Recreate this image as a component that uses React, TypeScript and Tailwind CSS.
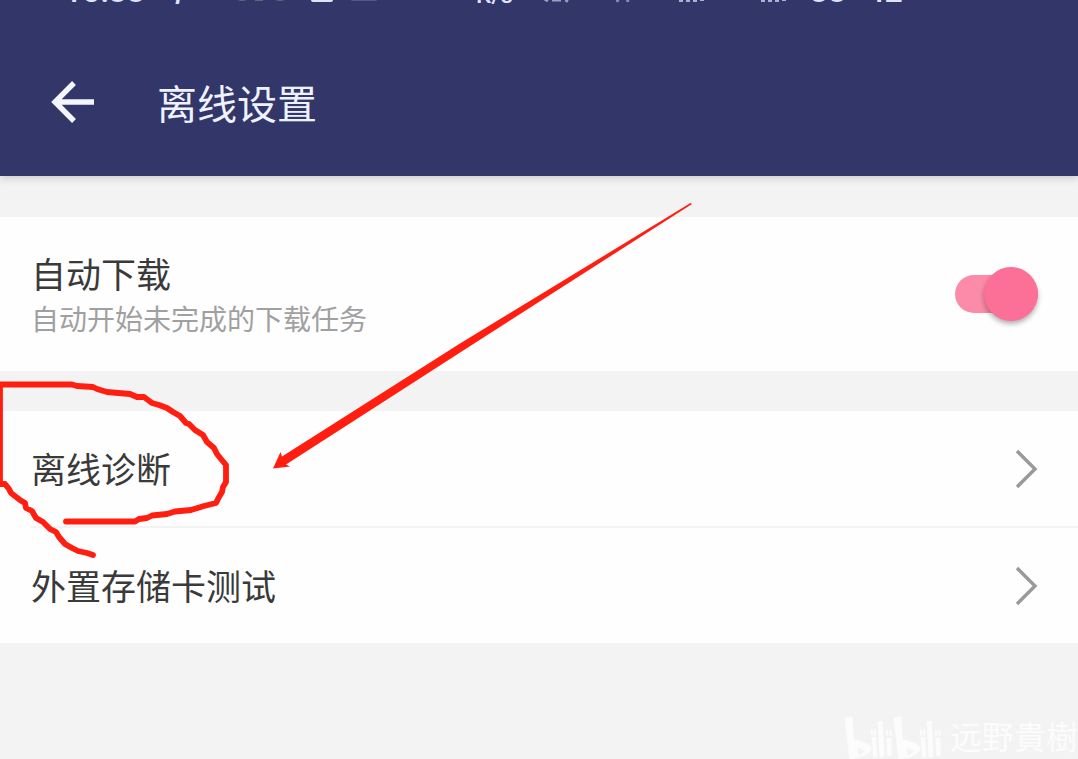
import { useState } from 'react';

const links = ['离线诊断', '外置存储卡测试'];

function SignalIcon() {
  return (
    <svg width="30" height="24" viewBox="0 0 30 24" fill="currentColor">
      <path d="M1 16h4v6H1zM8 11h4v11H8zM15 6h4v16h-4zM22 1h4v20h-4z" />
    </svg>
  );
}

function StatusBar() {
  return (
    <div className="flex h-1 items-end overflow-hidden pl-16 font-['Roboto',sans-serif] text-[32px] leading-[26px] font-medium text-[#dfe3ff]">
      <span className="w-[110px]">10:33</span>
      <span className="w-14">,</span>
      <svg className="opacity-30" width="60" height="24" viewBox="0 0 60 24" fill="#ddd0a0">
        <circle cx="12" cy="10" r="11" />
        <rect x="25" y="4" width="8" height="17" />
        <circle cx="50" cy="10" r="11" />
      </svg>
      <svg className="ml-5" width="24" height="24" viewBox="0 0 24 24" fill="currentColor">
        <rect x="1" y="2" width="22" height="20" rx="2" />
      </svg>
      <svg className="ml-4 opacity-20" width="28" height="24" viewBox="0 0 28 24" fill="currentColor">
        <rect y="3" width="28" height="18" rx="3" />
      </svg>
      <span className="ml-[98px] w-16 text-2xl leading-[18px]">K/s</span>
      <svg className="opacity-60" width="32" height="24" viewBox="0 0 32 24" fill="none" stroke="currentColor" strokeWidth="3">
        <path d="M3 4v14l5 3M12 20h9M28 4v14l-2 4" />
      </svg>
      <svg className="ml-10 opacity-50" width="18" height="24" viewBox="0 0 18 24" fill="none" stroke="currentColor" strokeWidth="3">
        <path d="M2 8l4 14M14 12l2 10" />
      </svg>
      <div className="ml-12 w-[82px] opacity-70">
        <SignalIcon />
      </div>
      <div className="opacity-70">
        <SignalIcon />
      </div>
      <span className="ml-5">33</span>
      <span className="ml-5">42</span>
    </div>
  );
}

function Chevron() {
  return (
    <svg width="24" height="42" viewBox="0 0 24 42" fill="none" stroke="#999" strokeWidth="3.4">
      <path d="M3 3l18 18L3 39" />
    </svg>
  );
}

function BilibiliLogo() {
  return (
    <svg width="98" height="44" viewBox="0 0 294 132" fill="currentColor" role="img" aria-label="bilibili">
      <g id="bili">
        <path
          fillRule="evenodd"
          d="M2 10L25 3L30 73C48 76 78 87 82 98C85 112 54 131 16 132ZM42 98L44 122L64 108Z"
        />
        <path d="M80 45l6-1 2 17-6 1zM90 44h6v17l-5 1zM83 67l13-1 4 60-12 2zM101 19l15-1 5 108-14 2zM126 46l6-1 1 17-6 1zM137 45h6v17h-6zM127 69h15l1 53-13 1z" />
      </g>
      <use href="#bili" x="147" />
    </svg>
  );
}

// red pen marks drawn over the page
function Annotations() {
  return (
    <svg
      className="pointer-events-none absolute top-0 left-0"
      width="1078"
      height="759"
      viewBox="0 0 1078 759"
      aria-hidden="true"
    >
      <g fill="none" stroke="#ff1e10" strokeWidth="5.8" strokeLinecap="round" strokeLinejoin="round">
        <path d="M66 521.5H135L139 519L147 518L152 515.5L167 514L175 511.5L191 510L204 506L216 503L219 497L222 492L223 487L226 482V465L221 459L217 454L214 448L207 442L203 435L195 430L189 424L186 423L180 416L173 412L167 408L159 405L152 403L144 397L137 397L130 394L107 392L97 389L93 387L77 386L72 384.5H0V484H5L9 489L11 493L20 500L25 503L26 508L32 511L36 518L43 522L50 529L56 532L59 537L65 544L72 548L78 551L87 553L93 555" />
      </g>
      <path d="M273 468.5L280.5 452L282 456.5L460 343.5L690.5 203L692 204L464 350L286 464.5L290 466.5Z" fill="#ff1e10" />
    </svg>
  );
}

export default function App() {
  const [autoDownload, setAutoDownload] = useState(true);

  return (
    <div className="relative flex min-h-screen flex-col overflow-hidden bg-[#f3f3f3] font-['Noto_Sans_CJK_SC',sans-serif] text-[#3a3a3a]">
      <header className="bg-[#333668] pb-11 shadow-[0_2px_8px_rgba(0,0,0,0.18)]">
        <StatusBar />
        <div className="flex items-center pt-[68px] pl-12">
          <button type="button" aria-label="返回" className="text-[#f4f6ff]">
            <svg width="48" height="48" viewBox="0 0 48 48" fill="none" stroke="currentColor" strokeWidth="5.4">
              <path d="M46 24H7M26 5L7 24L26 43" />
            </svg>
          </button>
          <h1 className="ml-[61px] text-[40px] leading-[60px] text-[#eef2ff]">离线设置</h1>
        </div>
      </header>

      <main className="mt-[41px]">
        <section className="flex items-center justify-between bg-[#fefefe] py-8 pr-10 pl-[31px]">
          <label htmlFor="auto-download">
            <span className="block text-[35px] leading-[48px]">自动下载</span>
            <span className="block text-[28px] leading-[42px] text-[#a0a0a0]">自动开始未完成的下载任务</span>
          </label>
          <input
            id="auto-download"
            type="checkbox"
            role="switch"
            checked={autoDownload}
            onChange={(e) => setAutoDownload(e.target.checked)}
            className="flex h-[38px] w-[83px] shrink-0 appearance-none items-center rounded-full bg-gray-300 after:block after:size-[54px] after:shrink-0 after:rounded-full after:bg-gray-100 after:shadow-[0_3px_5px_rgba(0,0,0,0.3)] checked:justify-end checked:bg-[#fb8ba8] checked:after:bg-[#fc6f97]"
          />
        </section>

        <nav className="mt-10 divide-y-2 divide-[#f3f3f3] bg-[#fefefe] pl-[31px]">
          {links.map((label) => (
            <div key={label}>
              <a href="#" className="flex h-[115px] items-center justify-between pr-10 text-[35px]">
                {label}
                <Chevron />
              </a>
            </div>
          ))}
        </nav>
      </main>

      <footer className="mt-auto flex items-end justify-end text-[#fcfcfc]">
        <BilibiliLogo />
        <span className="ml-2 text-[32px] leading-[48px]">远野貴樹</span>
      </footer>

      <Annotations />
    </div>
  );
}
